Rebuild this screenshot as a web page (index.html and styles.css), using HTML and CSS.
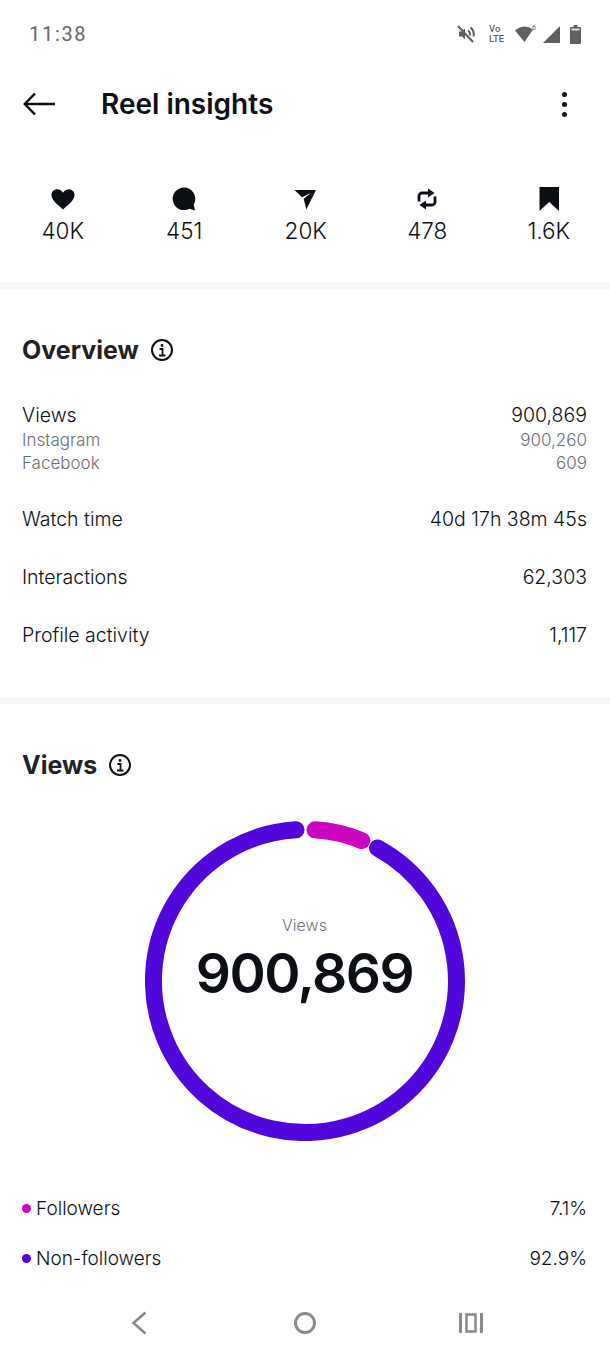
FILE: index.html
```html
<!DOCTYPE html>
<html lang="en">
<head>
  <meta charset="UTF-8">
  <meta name="viewport" content="width=device-width, initial-scale=1.0">
  <title>Reel insights</title>
  <link rel="stylesheet" href="styles.css">
</head>
<body>
  <div class="screen">
    <!-- Status bar -->
    <div class="status-bar">
      <span class="clock">11:38</span>
      <div class="status-icons">
        <svg width="18" height="18" viewBox="0 0 18 18" fill="none" stroke="#5f5f5f" stroke-width="2">
          <path d="M1 1l15 16"/>
          <path d="M2 6.500h3l3-3v11l-3-3H2z" fill="#5f5f5f" stroke="none"/>
          <path d="M11 5.500a5 5 0 0 1 2 5M13.500 2.500a9 9 0 0 1 3 9"/>
        </svg>
        <div class="volte"><span>Vo</span><span>LTE</span></div>
        <svg width="22" height="18" viewBox="0 0 22 18" fill="#5f5f5f">
          <path d="M0 5.500Q9 -2 18 4.500L9.500 17z"/>
          <text x="17" y="5" class="wifi-six">6</text>
        </svg>
        <svg class="signal" width="17" height="17" viewBox="0 0 17 17" fill="#5f5f5f"><path d="M17 0v17H0z"/></svg>
        <svg class="battery" width="11" height="19" viewBox="0 0 11 19" fill="#5f5f5f">
          <path d="M3.500 0h4v2h2.500a1 1 0 0 1 1 1v15a1 1 0 0 1-1 1H1a1 1 0 0 1-1-1V3a1 1 0 0 1 1-1h2.500z"/>
          <path d="M1.500 3.500h8v2h-8z" fill="#ddd"/>
        </svg>
      </div>
    </div>

    <!-- Header -->
    <header class="top-bar">
      <svg class="back" width="32" height="24" viewBox="0 0 32 24" fill="none" stroke="#0c1014" stroke-width="2.500">
        <path d="M32 12H2M12 1.500L1.800 12 12 22.500"/>
      </svg>
      <h1>Reel insights</h1>
      <div class="dots"><i></i><i></i><i></i></div>
    </header>

    <!-- Counts -->
    <div class="stats">
      <div class="stat">
        <svg width="24" height="24" viewBox="0 0 24 24" fill="#0c1014"><path d="M12 22.500C5 16.500 .5 12.600 .5 8 .5 4.500 3.200 2.300 6.200 2.300c2.400 0 4.500 1.200 5.800 3.400 1.300-2.200 3.400-3.400 5.800-3.400 3 0 5.700 2.200 5.700 5.700 0 4.600-4.500 8.500-11.500 14.500z"/></svg>
        <span>40K</span>
      </div>
      <div class="stat">
        <svg width="24" height="24" viewBox="0 0 24 24" fill="#0c1014"><path d="M12 .500a11.300 11.300 0 1 0 5.400 21.200l5.600 1.800-1.300-6A11.300 11.300 0 0 0 12 .500z"/></svg>
        <span>451</span>
      </div>
      <div class="stat">
        <svg width="24" height="24" viewBox="0 0 24 24" fill="#0c1014"><path d="M.500 3h21.500L12.300 22.500 9.700 11.800l7-5.800-8.600 4.200z"/></svg>
        <span>20K</span>
      </div>
      <div class="stat">
        <svg width="24" height="24" viewBox="0 0 24 24" fill="none" stroke="#0c1014" stroke-width="2.800">
          <path d="M4 14.500V9a3 3 0 0 1 3-3h7"/>
          <path d="M20 9.500V15a3 3 0 0 1-3 3h-7"/>
          <path d="M13 1.500v9L19.500 6zM11 13.500v9L4.500 18z" fill="#0c1014" stroke="none"/>
        </svg>
        <span>478</span>
      </div>
      <div class="stat">
        <svg width="24" height="24" viewBox="0 0 24 24" fill="#0c1014"><path d="M2.500 0h19.500v24L12.200 15 2.500 24z"/></svg>
        <span>1.6K</span>
      </div>
    </div>

    <div class="divider"></div>

    <!-- Overview -->
    <section class="overview">
      <div class="section-title">
        <h2>Overview</h2>
        <svg class="info" width="22" height="22" viewBox="0 0 22 22" fill="none" stroke="#0c1014" stroke-width="2">
          <circle cx="11" cy="11" r="10"/>
          <path d="M8.500 10h3v6M8 16.500h6.500" stroke-width="1.800"/>
          <circle cx="11" cy="6.500" r="1.400" fill="#0c1014" stroke="none"/>
        </svg>
      </div>
      <div class="metric-group">
        <div class="metric"><span>Views</span><span>900,869</span></div>
        <div class="metric metric-sub"><span>Instagram</span><span>900,260</span></div>
        <div class="metric metric-sub"><span>Facebook</span><span>609</span></div>
      </div>
      <div class="metric metric-gap"><span>Watch time</span><span>40d 17h 38m 45s</span></div>
      <div class="metric metric-gap"><span>Interactions</span><span>62,303</span></div>
      <div class="metric metric-gap"><span>Profile activity</span><span>1,117</span></div>
    </section>

    <div class="divider"></div>

    <!-- Views ring -->
    <section class="views">
      <div class="section-title">
        <h2>Views</h2>
        <svg class="info" width="22" height="22" viewBox="0 0 22 22" fill="none" stroke="#0c1014" stroke-width="2">
          <circle cx="11" cy="11" r="10"/>
          <path d="M8.500 10h3v6M8 16.500h6.500" stroke-width="1.800"/>
          <circle cx="11" cy="6.500" r="1.400" fill="#0c1014" stroke="none"/>
        </svg>
      </div>
      <div class="ring">
        <svg width="320" height="320" viewBox="0 0 320 320" fill="none" stroke-width="17" stroke-linecap="round">
          <path d="M232.500 27A151.500 151.500 0 1 1 151 8.770" stroke="#5106dc"/>
          <path d="M170.040 8.830A151.500 151.500 0 0 1 216.750 19.530" stroke="#cb04bd"/>
        </svg>
        <div class="ring-label">
          <span class="ring-caption">Views</span>
          <span class="ring-value">900,869</span>
        </div>
      </div>
      <div class="legend">
        <div class="legend-row">
          <span class="legend-name"><i class="dot dot-followers"></i>Followers</span>
          <span>7.1%</span>
        </div>
        <div class="legend-row">
          <span class="legend-name"><i class="dot dot-others"></i>Non-followers</span>
          <span>92.9%</span>
        </div>
      </div>
    </section>

    <!-- Android nav -->
    <nav class="nav-bar">
      <svg width="16" height="24" viewBox="0 0 16 24" fill="none" stroke="#8a8a8a" stroke-width="2.600"><path d="M14.500 1.500L2.500 12l12 10.500"/></svg>
      <svg width="24" height="24" viewBox="0 0 24 24" fill="none" stroke="#8a8a8a" stroke-width="3"><circle cx="12" cy="12" r="9.500"/></svg>
      <svg width="24" height="22" viewBox="0 0 24 22" fill="none" stroke="#8a8a8a" stroke-width="3"><path d="M1.500 1v20M22.500 1v20"/><path d="M7.500 2.500h9v17h-9z" stroke-width="2.500"/></svg>
    </nav>
  </div>
</body>
</html>
```

FILE: styles.css
```css
* {
  box-sizing: border-box;
}
body {
  margin: 0;
  background-color: #fff;
  color: #0c1014;
  font-family: 'Inter', 'Liberation Sans', sans-serif;
}
.screen {
  height: 1356px;
  overflow: hidden;
}
.status-bar {
  display: flex;
  justify-content: space-between;
  align-items: center;
  height: 68px;
  padding: 0 29px;
}
.clock {
  font-family: 'Roboto', sans-serif;
  font-size: 20px;
  letter-spacing: 1.700px;
  color: #666;
}
.status-icons {
  display: flex;
  align-items: center;
  gap: 7px;
}
.volte {
  display: flex;
  flex-direction: column;
  width: 18px;
  margin: 0 1px 0 7px;
  font-family: 'Roboto', sans-serif;
  font-size: 9.500px;
  line-height: 10px;
  font-weight: 500;
  color: #5f5f5f;
}
.wifi-six {
  font-family: 'Roboto', sans-serif;
  font-size: 7px;
}
.signal {
  margin-left: -1px;
}
.battery {
  margin-left: 3px;
}
.top-bar {
  display: flex;
  align-items: center;
  height: 72px;
  padding: 0 22px 0 23px;
}
.back {
  margin-right: 46px;
}
h1 {
  flex: 1;
  margin: 0;
  font-size: 28px;
  font-weight: 600;
}
.dots {
  display: flex;
  flex-direction: column;
  gap: 5px;
  margin-right: 21px;
}
.dots i {
  width: 5px;
  height: 5px;
  border-radius: 50%;
  background-color: #0c1014;
}
.stats {
  display: grid;
  grid-template-columns: repeat(5, 121.500px);
  padding: 47px 0 0 2px;
  height: 142px;
}
.stat {
  display: flex;
  flex-direction: column;
  align-items: center;
  gap: 6px;
  font-size: 22.500px;
  font-weight: 300;
  line-height: 28px;
}
.divider {
  height: 7px;
  background-color: #f7f7f7;
}
.overview {
  height: 408px;
  padding: 47px 23px 0 22px;
}
.section-title {
  display: flex;
  align-items: center;
  gap: 12px;
  height: 28px;
}
h2 {
  margin: 0;
  font-size: 25px;
  font-weight: 700;
  color: #222;
}
.metric-group {
  margin-top: 38px;
}
.metric {
  display: flex;
  justify-content: space-between;
  font-size: 19.500px;
  font-weight: 300;
  line-height: 27px;
}
.metric-sub {
  font-size: 17px;
  line-height: 23px;
  color: #6a6e73;
}
.metric-gap {
  margin-top: 31px;
}
.views {
  height: 582px;
  padding: 47px 23px 0 22px;
}
.ring {
  display: grid;
  justify-content: center;
  margin-top: 42px;
}
.ring svg {
  grid-area: 1 / 1;
}
.ring-label {
  grid-area: 1 / 1;
  display: flex;
  flex-direction: column;
  align-items: center;
  padding-top: 93px;
}
.ring-caption {
  font-size: 16px;
  font-weight: 300;
  color: #70757a;
  line-height: 22px;
}
.ring-value {
  font-size: 55px;
  font-weight: 600;
  letter-spacing: -1.500px;
  line-height: 74px;
}
.legend {
  margin-top: 54px;
}
.legend-row {
  display: flex;
  justify-content: space-between;
  height: 50px;
  font-size: 19px;
  font-weight: 300;
  line-height: 28px;
}
.legend-name {
  display: flex;
  align-items: center;
  height: 28px;
}
.dot {
  width: 9px;
  height: 9px;
  margin: -2px 5px 0 0;
  border-radius: 50%;
}
.dot-followers {
  background-color: #cb04bd;
}
.dot-others {
  background-color: #5106dc;
}
.nav-bar {
  display: grid;
  grid-template-columns: repeat(3, 166px);
  justify-items: center;
  align-items: center;
  height: 40px;
  margin-top: 17px;
  padding-left: 56px;
}
```
